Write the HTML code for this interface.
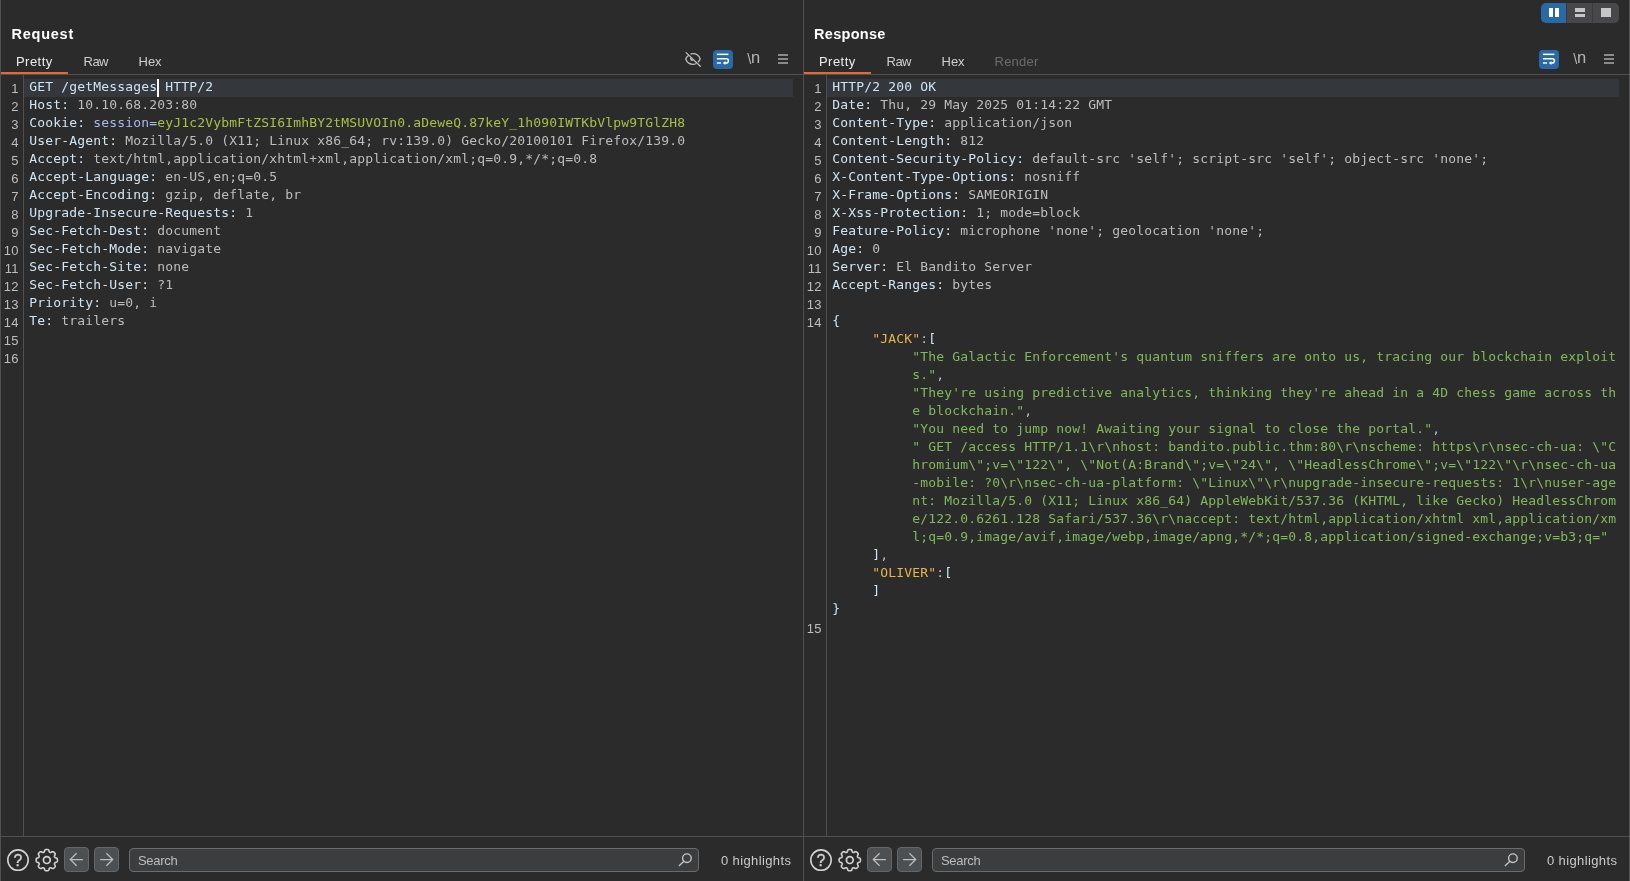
<!DOCTYPE html>
<html lang="en"><head><meta charset="utf-8"><title>Repeater</title>
<style>
*{box-sizing:border-box;margin:0;padding:0}
html,body{width:1630px;height:881px;overflow:hidden;background:#2b2b2b}
body{position:relative;font-family:"Liberation Sans","DejaVu Sans",sans-serif;font-size:13px;color:#d6d6d6}
#app{position:absolute;left:0;top:0;width:1630px;height:881px;will-change:transform}
.abs{position:absolute}
.pane{position:absolute;top:0;height:881px;overflow:hidden}
.vline,.hline{position:absolute;background:#505050}
.title{position:absolute;top:24px;height:20px;line-height:20px;font-weight:700;font-size:14.5px;color:#fff;white-space:pre}
.tab{position:absolute;top:52px;height:20px;line-height:20px;font-size:13px;color:#cecece;white-space:pre}
.tab.dis{color:#6c6c6c}
.tab.sel{color:#ececec}
.uline{position:absolute;top:72px;height:2px;background:#e26b35}
.hl{position:absolute;top:79px;height:18px;background:#34383c}
.ln{position:absolute;left:0;width:18.9px;height:18px;line-height:18px;text-align:right;font-size:13px;color:#bebebe;padding-top:1px;white-space:pre;letter-spacing:.3px}
.row{position:absolute;left:29.2px;height:18px;line-height:18px;white-space:pre;font-family:"DejaVu Sans Mono","Liberation Mono",monospace;font-size:13px;letter-spacing:0.1733px;margin-top:-1px}
.hn{color:#cfe4f4}.hv{color:#bdbdbd}.pk{color:#a9b9ef}.pv{color:#a5c044}.jk{color:#e6b450}.js{color:#80b95a}
.caret{position:absolute;left:157px;top:79px;width:2px;height:18px;background:#fff}
.wrapbtn{position:absolute;top:50px}
.nl{position:absolute;top:47.5px;height:22px;line-height:22px;color:#b4b4b4;white-space:pre}
.nl b{font-weight:400;font-size:14.5px;display:inline-block;vertical-align:baseline;position:relative;top:-0.2px}
.nl i{font-style:normal;font-size:16.5px;display:inline-block;vertical-align:baseline;margin-left:-0.2px;letter-spacing:0;position:relative;top:-1.7px}
.burger{position:absolute;top:54px;width:10px;height:10px;background:linear-gradient(#8a8a8a 0 2px,transparent 2px 4px,#8a8a8a 4px 6px,transparent 6px 8px,#8a8a8a 8px 10px)}
.navbtn{position:absolute;top:847px;width:25px;height:25px;border-radius:4px;background:#4c5052;border:1px solid #63676a}
.navbtn svg{position:absolute;left:-1px;top:-1px}
.search{position:absolute;top:848px;height:24px;border:1px solid #6b6b6b;border-radius:4px;background:#3c3d3f}
.search span{position:absolute;left:8px;top:1.7px;height:20px;line-height:20px;font-size:13px;color:#bdbdbd;letter-spacing:-.3px}
.search .mag{position:absolute;right:5px;top:2.9px}
.hi{position:absolute;top:851px;height:20px;line-height:20px;font-size:13px;color:#cacaca;white-space:pre}
.seg{position:absolute;top:3px;height:20px}
</style></head>
<body>
<div id="app">
<!-- frame lines -->
<div class="vline" style="left:0;top:0;width:1px;height:881px"></div>
<div class="vline" style="left:803px;top:0;width:1px;height:881px"></div>
<div class="vline" style="left:1629px;top:0;width:1px;height:881px;background:#565656"></div>
<div class="hline" style="left:1px;top:74px;width:802px;height:1px"></div>
<div class="hline" style="left:804px;top:74px;width:825px;height:1px"></div>
<div class="hline" style="left:0;top:836px;width:1629px;height:1px"></div>
<div class="vline" style="left:23px;top:75px;width:1px;height:761px"></div>
<div class="vline" style="left:826px;top:75px;width:1px;height:761px"></div>

<!-- ================= REQUEST ================= -->
<div class="title" style="left:11.5px;letter-spacing:.75px">Request</div>
<div class="tab sel" style="left:16px;letter-spacing:.45px">Pretty</div>
<div class="tab" style="left:83.5px;letter-spacing:-.5px">Raw</div>
<div class="tab" style="left:138.5px">Hex</div>
<div class="uline" style="left:1px;width:67px"></div>

<svg class="abs" style="left:678px;top:46px" width="30" height="26" viewBox="0 0 30 26"><g transform="translate(14.95 13.05) scale(.935) translate(-14.95 -13.05)"><g fill="none" stroke="#bebebe" stroke-width="1.4" stroke-linecap="round"><path d="M7.6 6.2L22.8 20.7"/><path d="M10.2 9.2C8.6 10.3 7.6 11.7 7.2 13c1.2 3.2 4.2 5.7 7.8 5.7 1.1 0 2.1-.2 3-.6"/><path d="M13 7.6c.6-.2 1.300-.3 2-.3 3.600 0 6.600 2.500 7.700 5.700-.4 1.100-1.100 2.100-2 3"/></g><path d="M12.2 11.4a2.400 2.400 0 0 0 3.300 3.300z" fill="#bebebe"/></g></svg>
<svg class="wrapbtn" style="left:713px" width="20" height="19" viewBox="0 0 20 19"><rect width="20" height="19" rx="4" ry="4" fill="#2969a6"/><g fill="none" stroke="#fff" stroke-width="1.5"><path d="M3.9 4.35H15.4"/><path d="M3.9 8.7H13.3a2.15 2.15 0 0 1 0 4.3H11.8"/></g><path d="M9.7 13l2.7-2v4z" fill="#fff"/><path d="M3.9 13H8" stroke="#dfe8f1" stroke-width="1.7" fill="none"/></svg>
<div class="nl" style="left:747.2px"><b>\</b><i>n</i></div>
<div class="burger" style="left:778px"></div>

<div class="hl" style="left:24px;width:769px"></div>
<div class="caret"></div>
<div class="pane" id="req" style="left:0;width:803px">
<div class="ln" style="top:79px">1</div>
<div class="row" style="top:79px"><span class="hn">GET /getMessages HTTP/2</span></div>
<div class="ln" style="top:97px">2</div>
<div class="row" style="top:97px"><span class="hn">Host:</span><span class="hv"> 10.10.68.203:80</span></div>
<div class="ln" style="top:115px">3</div>
<div class="row" style="top:115px"><span class="hn">Cookie:</span><span class="hv"> </span><span class="pk">session=</span><span class="pv">eyJ1c2VybmFtZSI6ImhBY2tMSUVOIn0.aDeweQ.87keY_1h090IWTKbVlpw9TGlZH8</span></div>
<div class="ln" style="top:133px">4</div>
<div class="row" style="top:133px"><span class="hn">User-Agent:</span><span class="hv"> Mozilla/5.0 (X11; Linux x86_64; rv:139.0) Gecko/20100101 Firefox/139.0</span></div>
<div class="ln" style="top:151px">5</div>
<div class="row" style="top:151px"><span class="hn">Accept:</span><span class="hv"> text/html,application/xhtml+xml,application/xml;q=0.9,*/*;q=0.8</span></div>
<div class="ln" style="top:169px">6</div>
<div class="row" style="top:169px"><span class="hn">Accept-Language:</span><span class="hv"> en-US,en;q=0.5</span></div>
<div class="ln" style="top:187px">7</div>
<div class="row" style="top:187px"><span class="hn">Accept-Encoding:</span><span class="hv"> gzip, deflate, br</span></div>
<div class="ln" style="top:205px">8</div>
<div class="row" style="top:205px"><span class="hn">Upgrade-Insecure-Requests:</span><span class="hv"> 1</span></div>
<div class="ln" style="top:223px">9</div>
<div class="row" style="top:223px"><span class="hn">Sec-Fetch-Dest:</span><span class="hv"> document</span></div>
<div class="ln" style="top:241px">10</div>
<div class="row" style="top:241px"><span class="hn">Sec-Fetch-Mode:</span><span class="hv"> navigate</span></div>
<div class="ln" style="top:259px">11</div>
<div class="row" style="top:259px"><span class="hn">Sec-Fetch-Site:</span><span class="hv"> none</span></div>
<div class="ln" style="top:277px">12</div>
<div class="row" style="top:277px"><span class="hn">Sec-Fetch-User:</span><span class="hv"> ?1</span></div>
<div class="ln" style="top:295px">13</div>
<div class="row" style="top:295px"><span class="hn">Priority:</span><span class="hv"> u=0, i</span></div>
<div class="ln" style="top:313px">14</div>
<div class="row" style="top:313px"><span class="hn">Te:</span><span class="hv"> trailers</span></div>
<div class="ln" style="top:331px">15</div>
<div class="ln" style="top:349px">16</div>
</div>

<svg class="abs" style="left:6px;top:848px" width="24" height="24" viewBox="0 0 24 24"><circle cx="12" cy="12.1" r="10.2" fill="none" stroke="#d2d2d2" stroke-width="1.6"/><text x="11.9" y="17.7" text-anchor="middle" font-family="Liberation Sans, sans-serif" font-size="15.8" font-weight="400" fill="#d2d2d2" stroke="#d2d2d2" stroke-width="0.4">?</text></svg>
<svg class="abs" style="left:34px;top:847px" width="26" height="26" viewBox="0 0 26 26"><g transform="translate(12.8,13.1)" fill="none" stroke="#d2d2d2" stroke-width="1.6" stroke-linejoin="round"><circle r="3.4" stroke-width="1.7"/><path d="M0.00 -10.65 L0.28 -10.64 L0.56 -10.63 L0.83 -10.60 L1.11 -10.54 L1.38 -10.45 L1.63 -10.30 L1.86 -10.04 L2.05 -9.65 L2.20 -9.17 L2.34 -8.72 L2.48 -8.38 L2.65 -8.15 L2.83 -7.98 L3.02 -7.86 L3.22 -7.77 L3.43 -7.70 L3.65 -7.64 L3.89 -7.63 L4.17 -7.68 L4.51 -7.82 L4.93 -8.04 L5.37 -8.27 L5.78 -8.41 L6.13 -8.44 L6.42 -8.36 L6.67 -8.24 L6.90 -8.08 L7.12 -7.91 L7.33 -7.72 L7.53 -7.53 L7.72 -7.33 L7.91 -7.12 L8.08 -6.90 L8.24 -6.67 L8.36 -6.42 L8.44 -6.13 L8.41 -5.78 L8.27 -5.37 L8.04 -4.93 L7.82 -4.51 L7.68 -4.17 L7.63 -3.89 L7.64 -3.65 L7.70 -3.43 L7.77 -3.22 L7.86 -3.02 L7.98 -2.83 L8.15 -2.65 L8.38 -2.48 L8.72 -2.34 L9.17 -2.20 L9.65 -2.05 L10.04 -1.86 L10.30 -1.63 L10.45 -1.38 L10.54 -1.11 L10.60 -0.83 L10.63 -0.56 L10.64 -0.28 L10.65 -0.00 L10.64 0.28 L10.63 0.56 L10.60 0.83 L10.54 1.11 L10.45 1.38 L10.30 1.63 L10.04 1.86 L9.65 2.05 L9.17 2.20 L8.72 2.34 L8.38 2.48 L8.15 2.65 L7.98 2.83 L7.86 3.02 L7.77 3.22 L7.70 3.43 L7.64 3.65 L7.63 3.89 L7.68 4.17 L7.82 4.51 L8.04 4.93 L8.27 5.37 L8.41 5.78 L8.44 6.13 L8.36 6.42 L8.24 6.67 L8.08 6.90 L7.91 7.12 L7.72 7.33 L7.53 7.53 L7.33 7.72 L7.12 7.91 L6.90 8.08 L6.67 8.24 L6.42 8.36 L6.13 8.44 L5.78 8.41 L5.37 8.27 L4.93 8.04 L4.51 7.82 L4.17 7.68 L3.89 7.63 L3.65 7.64 L3.43 7.70 L3.22 7.77 L3.02 7.86 L2.83 7.98 L2.65 8.15 L2.48 8.38 L2.34 8.72 L2.20 9.17 L2.05 9.65 L1.86 10.04 L1.63 10.30 L1.38 10.45 L1.11 10.54 L0.83 10.60 L0.56 10.63 L0.28 10.64 L0.00 10.65 L-0.28 10.64 L-0.56 10.63 L-0.83 10.60 L-1.11 10.54 L-1.38 10.45 L-1.63 10.30 L-1.86 10.04 L-2.05 9.65 L-2.20 9.17 L-2.34 8.72 L-2.48 8.38 L-2.65 8.15 L-2.83 7.98 L-3.02 7.86 L-3.22 7.77 L-3.43 7.70 L-3.65 7.64 L-3.89 7.63 L-4.17 7.68 L-4.51 7.82 L-4.93 8.04 L-5.37 8.27 L-5.78 8.41 L-6.13 8.44 L-6.42 8.36 L-6.67 8.24 L-6.90 8.08 L-7.12 7.91 L-7.33 7.72 L-7.53 7.53 L-7.72 7.33 L-7.91 7.12 L-8.08 6.90 L-8.24 6.67 L-8.36 6.42 L-8.44 6.13 L-8.41 5.78 L-8.27 5.37 L-8.04 4.93 L-7.82 4.51 L-7.68 4.17 L-7.63 3.89 L-7.64 3.65 L-7.70 3.43 L-7.77 3.22 L-7.86 3.02 L-7.98 2.83 L-8.15 2.65 L-8.38 2.48 L-8.72 2.34 L-9.17 2.20 L-9.65 2.05 L-10.04 1.86 L-10.30 1.63 L-10.45 1.38 L-10.54 1.11 L-10.60 0.83 L-10.63 0.56 L-10.64 0.28 L-10.65 0.00 L-10.64 -0.28 L-10.63 -0.56 L-10.60 -0.83 L-10.54 -1.11 L-10.45 -1.38 L-10.30 -1.63 L-10.04 -1.86 L-9.65 -2.05 L-9.17 -2.20 L-8.72 -2.34 L-8.38 -2.48 L-8.15 -2.65 L-7.98 -2.83 L-7.86 -3.02 L-7.77 -3.22 L-7.70 -3.43 L-7.64 -3.65 L-7.63 -3.89 L-7.68 -4.17 L-7.82 -4.51 L-8.04 -4.93 L-8.27 -5.37 L-8.41 -5.78 L-8.44 -6.13 L-8.36 -6.42 L-8.24 -6.67 L-8.08 -6.90 L-7.91 -7.12 L-7.72 -7.33 L-7.53 -7.53 L-7.33 -7.72 L-7.12 -7.91 L-6.90 -8.08 L-6.67 -8.24 L-6.42 -8.36 L-6.13 -8.44 L-5.78 -8.41 L-5.37 -8.27 L-4.93 -8.04 L-4.51 -7.82 L-4.17 -7.68 L-3.89 -7.63 L-3.65 -7.64 L-3.43 -7.70 L-3.22 -7.77 L-3.02 -7.86 L-2.83 -7.98 L-2.65 -8.15 L-2.48 -8.38 L-2.34 -8.72 L-2.20 -9.17 L-2.05 -9.65 L-1.86 -10.04 L-1.63 -10.30 L-1.38 -10.45 L-1.11 -10.54 L-0.83 -10.60 L-0.56 -10.63 L-0.28 -10.64Z"/></g></svg>
<div class="navbtn" style="left:64px"><svg width="25" height="25" viewBox="0 0 25 25"><path d="M18.9 12.5H6.6M12.6 6.2L6.3 12.5l6.3 6.3" fill="none" stroke="#bdbdbd" stroke-width="1.25"/></svg></div>
<div class="navbtn" style="left:94px"><svg width="25" height="25" viewBox="0 0 25 25"><path d="M6.1 12.5H18.4M12.4 6.2l6.3 6.3-6.3 6.3" fill="none" stroke="#bdbdbd" stroke-width="1.25"/></svg></div>
<div class="search" style="left:129px;width:570px"><span>Search</span><svg class="mag" width="16" height="16" viewBox="0 0 16 16"><circle cx="9.9" cy="6.2" r="4.3" fill="none" stroke="#c4c4c4" stroke-width="1.4"/><path d="M6.9 9.3L1.9 14" stroke="#c4c4c4" stroke-width="1.4" fill="none"/></svg></div>

<div class="hi" style="left:721px;letter-spacing:.38px">0 highlights</div>

<!-- ================= RESPONSE ================= -->
<div class="seg" style="left:1541px;width:78px;border-radius:5px;overflow:hidden;background:#3a3a3b">
 <div class="abs" style="left:0;top:0;width:25px;height:20px;background:#2969a6"></div>
 <div class="abs" style="left:26px;top:0;width:25px;height:20px;background:#48484a"></div>
 <div class="abs" style="left:52px;top:0;width:26px;height:20px;background:#48484a"></div>
 <div class="abs" style="left:7.6px;top:5px;width:4.4px;height:9px;background:#fff"></div>
 <div class="abs" style="left:14px;top:5px;width:4.4px;height:9px;background:#fff"></div>
 <div class="abs" style="left:33.5px;top:5.2px;width:10.7px;height:3.4px;background:#c6c6c6"></div>
 <div class="abs" style="left:33.5px;top:10.6px;width:10.7px;height:3.4px;background:#c6c6c6"></div>
 <div class="abs" style="left:59.6px;top:5.2px;width:10.7px;height:8.8px;background:#c6c6c6"></div>
</div>
<div class="title" style="left:814px;letter-spacing:.3px">Response</div>
<div class="tab sel" style="left:819px;letter-spacing:.45px">Pretty</div>
<div class="tab" style="left:886.5px;letter-spacing:-.5px">Raw</div>
<div class="tab" style="left:941.5px">Hex</div>
<div class="tab dis" style="left:994.6px;letter-spacing:.2px">Render</div>
<div class="uline" style="left:804px;width:67px"></div>
<svg class="wrapbtn" style="left:1539px" width="20" height="19" viewBox="0 0 20 19"><rect width="20" height="19" rx="4" ry="4" fill="#2969a6"/><g fill="none" stroke="#fff" stroke-width="1.5"><path d="M3.9 4.35H15.4"/><path d="M3.9 8.7H13.3a2.15 2.15 0 0 1 0 4.3H11.8"/></g><path d="M9.7 13l2.7-2v4z" fill="#fff"/><path d="M3.9 13H8" stroke="#dfe8f1" stroke-width="1.7" fill="none"/></svg>
<div class="nl" style="left:1573.2px"><b>\</b><i>n</i></div>
<div class="burger" style="left:1604px"></div>

<div class="hl" style="left:827px;width:792px"></div>
<div class="pane" id="res" style="left:803px;width:826px">
<div class="ln" style="top:79px">1</div>
<div class="row" style="top:79px"><span class="hn">HTTP/2 200 OK</span></div>
<div class="ln" style="top:97px">2</div>
<div class="row" style="top:97px"><span class="hn">Date:</span><span class="hv"> Thu, 29 May 2025 01:14:22 GMT</span></div>
<div class="ln" style="top:115px">3</div>
<div class="row" style="top:115px"><span class="hn">Content-Type:</span><span class="hv"> application/json</span></div>
<div class="ln" style="top:133px">4</div>
<div class="row" style="top:133px"><span class="hn">Content-Length:</span><span class="hv"> 812</span></div>
<div class="ln" style="top:151px">5</div>
<div class="row" style="top:151px"><span class="hn">Content-Security-Policy:</span><span class="hv"> default-src 'self'; script-src 'self'; object-src 'none';</span></div>
<div class="ln" style="top:169px">6</div>
<div class="row" style="top:169px"><span class="hn">X-Content-Type-Options:</span><span class="hv"> nosniff</span></div>
<div class="ln" style="top:187px">7</div>
<div class="row" style="top:187px"><span class="hn">X-Frame-Options:</span><span class="hv"> SAMEORIGIN</span></div>
<div class="ln" style="top:205px">8</div>
<div class="row" style="top:205px"><span class="hn">X-Xss-Protection:</span><span class="hv"> 1; mode=block</span></div>
<div class="ln" style="top:223px">9</div>
<div class="row" style="top:223px"><span class="hn">Feature-Policy:</span><span class="hv"> microphone 'none'; geolocation 'none';</span></div>
<div class="ln" style="top:241px">10</div>
<div class="row" style="top:241px"><span class="hn">Age:</span><span class="hv"> 0</span></div>
<div class="ln" style="top:259px">11</div>
<div class="row" style="top:259px"><span class="hn">Server:</span><span class="hv"> El Bandito Server</span></div>
<div class="ln" style="top:277px">12</div>
<div class="row" style="top:277px"><span class="hn">Accept-Ranges:</span><span class="hv"> bytes</span></div>
<div class="ln" style="top:295px">13</div>
<div class="ln" style="top:313px">14</div>
<div class="row" style="top:313px"><span class="hn">{</span></div>
<div class="row" style="top:331px">     <span class="jk">"JACK"</span><span class="hv">:</span><span class="hn">[</span></div>
<div class="row" style="top:349px">          <span class="js">"The Galactic Enforcement's quantum sniffers are onto us, tracing our blockchain exploit</span></div>
<div class="row" style="top:367px">          <span class="js">s."</span><span class="hv">,</span></div>
<div class="row" style="top:385px">          <span class="js">"They're using predictive analytics, thinking they're ahead in a 4D chess game across th</span></div>
<div class="row" style="top:403px">          <span class="js">e blockchain."</span><span class="hv">,</span></div>
<div class="row" style="top:421px">          <span class="js">"You need to jump now! Awaiting your signal to close the portal."</span><span class="hv">,</span></div>
<div class="row" style="top:439px">          <span class="js">" GET /access HTTP/1.1\r\nhost: bandito.public.thm:80\r\nscheme: https\r\nsec-ch-ua: \"C</span></div>
<div class="row" style="top:457px">          <span class="js">hromium\";v=\"122\", \"Not(A:Brand\";v=\"24\", \"HeadlessChrome\";v=\"122\"\r\nsec-ch-ua</span></div>
<div class="row" style="top:475px">          <span class="js">-mobile: ?0\r\nsec-ch-ua-platform: \"Linux\"\r\nupgrade-insecure-requests: 1\r\nuser-age</span></div>
<div class="row" style="top:493px">          <span class="js">nt: Mozilla/5.0 (X11; Linux x86_64) AppleWebKit/537.36 (KHTML, like Gecko) HeadlessChrom</span></div>
<div class="row" style="top:511px">          <span class="js">e/122.0.6261.128 Safari/537.36\r\naccept: text/html,application/xhtml xml,application/xm</span></div>
<div class="row" style="top:529px">          <span class="js">l;q=0.9,image/avif,image/webp,image/apng,*/*;q=0.8,application/signed-exchange;v=b3;q="</span></div>
<div class="row" style="top:547px">     <span class="hn">]</span><span class="hv">,</span></div>
<div class="row" style="top:565px">     <span class="jk">"OLIVER"</span><span class="hv">:</span><span class="hn">[</span></div>
<div class="row" style="top:583px">     <span class="hn">]</span></div>
<div class="row" style="top:601px"><span class="hn">}</span></div>
<div class="ln" style="top:619px">15</div>
</div>

<svg class="abs" style="left:809px;top:848px" width="24" height="24" viewBox="0 0 24 24"><circle cx="12" cy="12.1" r="10.2" fill="none" stroke="#d2d2d2" stroke-width="1.6"/><text x="11.9" y="17.7" text-anchor="middle" font-family="Liberation Sans, sans-serif" font-size="15.8" font-weight="400" fill="#d2d2d2" stroke="#d2d2d2" stroke-width="0.4">?</text></svg>
<svg class="abs" style="left:837px;top:847px" width="26" height="26" viewBox="0 0 26 26"><g transform="translate(12.8,13.1)" fill="none" stroke="#d2d2d2" stroke-width="1.6" stroke-linejoin="round"><circle r="3.4" stroke-width="1.7"/><path d="M0.00 -10.65 L0.28 -10.64 L0.56 -10.63 L0.83 -10.60 L1.11 -10.54 L1.38 -10.45 L1.63 -10.30 L1.86 -10.04 L2.05 -9.65 L2.20 -9.17 L2.34 -8.72 L2.48 -8.38 L2.65 -8.15 L2.83 -7.98 L3.02 -7.86 L3.22 -7.77 L3.43 -7.70 L3.65 -7.64 L3.89 -7.63 L4.17 -7.68 L4.51 -7.82 L4.93 -8.04 L5.37 -8.27 L5.78 -8.41 L6.13 -8.44 L6.42 -8.36 L6.67 -8.24 L6.90 -8.08 L7.12 -7.91 L7.33 -7.72 L7.53 -7.53 L7.72 -7.33 L7.91 -7.12 L8.08 -6.90 L8.24 -6.67 L8.36 -6.42 L8.44 -6.13 L8.41 -5.78 L8.27 -5.37 L8.04 -4.93 L7.82 -4.51 L7.68 -4.17 L7.63 -3.89 L7.64 -3.65 L7.70 -3.43 L7.77 -3.22 L7.86 -3.02 L7.98 -2.83 L8.15 -2.65 L8.38 -2.48 L8.72 -2.34 L9.17 -2.20 L9.65 -2.05 L10.04 -1.86 L10.30 -1.63 L10.45 -1.38 L10.54 -1.11 L10.60 -0.83 L10.63 -0.56 L10.64 -0.28 L10.65 -0.00 L10.64 0.28 L10.63 0.56 L10.60 0.83 L10.54 1.11 L10.45 1.38 L10.30 1.63 L10.04 1.86 L9.65 2.05 L9.17 2.20 L8.72 2.34 L8.38 2.48 L8.15 2.65 L7.98 2.83 L7.86 3.02 L7.77 3.22 L7.70 3.43 L7.64 3.65 L7.63 3.89 L7.68 4.17 L7.82 4.51 L8.04 4.93 L8.27 5.37 L8.41 5.78 L8.44 6.13 L8.36 6.42 L8.24 6.67 L8.08 6.90 L7.91 7.12 L7.72 7.33 L7.53 7.53 L7.33 7.72 L7.12 7.91 L6.90 8.08 L6.67 8.24 L6.42 8.36 L6.13 8.44 L5.78 8.41 L5.37 8.27 L4.93 8.04 L4.51 7.82 L4.17 7.68 L3.89 7.63 L3.65 7.64 L3.43 7.70 L3.22 7.77 L3.02 7.86 L2.83 7.98 L2.65 8.15 L2.48 8.38 L2.34 8.72 L2.20 9.17 L2.05 9.65 L1.86 10.04 L1.63 10.30 L1.38 10.45 L1.11 10.54 L0.83 10.60 L0.56 10.63 L0.28 10.64 L0.00 10.65 L-0.28 10.64 L-0.56 10.63 L-0.83 10.60 L-1.11 10.54 L-1.38 10.45 L-1.63 10.30 L-1.86 10.04 L-2.05 9.65 L-2.20 9.17 L-2.34 8.72 L-2.48 8.38 L-2.65 8.15 L-2.83 7.98 L-3.02 7.86 L-3.22 7.77 L-3.43 7.70 L-3.65 7.64 L-3.89 7.63 L-4.17 7.68 L-4.51 7.82 L-4.93 8.04 L-5.37 8.27 L-5.78 8.41 L-6.13 8.44 L-6.42 8.36 L-6.67 8.24 L-6.90 8.08 L-7.12 7.91 L-7.33 7.72 L-7.53 7.53 L-7.72 7.33 L-7.91 7.12 L-8.08 6.90 L-8.24 6.67 L-8.36 6.42 L-8.44 6.13 L-8.41 5.78 L-8.27 5.37 L-8.04 4.93 L-7.82 4.51 L-7.68 4.17 L-7.63 3.89 L-7.64 3.65 L-7.70 3.43 L-7.77 3.22 L-7.86 3.02 L-7.98 2.83 L-8.15 2.65 L-8.38 2.48 L-8.72 2.34 L-9.17 2.20 L-9.65 2.05 L-10.04 1.86 L-10.30 1.63 L-10.45 1.38 L-10.54 1.11 L-10.60 0.83 L-10.63 0.56 L-10.64 0.28 L-10.65 0.00 L-10.64 -0.28 L-10.63 -0.56 L-10.60 -0.83 L-10.54 -1.11 L-10.45 -1.38 L-10.30 -1.63 L-10.04 -1.86 L-9.65 -2.05 L-9.17 -2.20 L-8.72 -2.34 L-8.38 -2.48 L-8.15 -2.65 L-7.98 -2.83 L-7.86 -3.02 L-7.77 -3.22 L-7.70 -3.43 L-7.64 -3.65 L-7.63 -3.89 L-7.68 -4.17 L-7.82 -4.51 L-8.04 -4.93 L-8.27 -5.37 L-8.41 -5.78 L-8.44 -6.13 L-8.36 -6.42 L-8.24 -6.67 L-8.08 -6.90 L-7.91 -7.12 L-7.72 -7.33 L-7.53 -7.53 L-7.33 -7.72 L-7.12 -7.91 L-6.90 -8.08 L-6.67 -8.24 L-6.42 -8.36 L-6.13 -8.44 L-5.78 -8.41 L-5.37 -8.27 L-4.93 -8.04 L-4.51 -7.82 L-4.17 -7.68 L-3.89 -7.63 L-3.65 -7.64 L-3.43 -7.70 L-3.22 -7.77 L-3.02 -7.86 L-2.83 -7.98 L-2.65 -8.15 L-2.48 -8.38 L-2.34 -8.72 L-2.20 -9.17 L-2.05 -9.65 L-1.86 -10.04 L-1.63 -10.30 L-1.38 -10.45 L-1.11 -10.54 L-0.83 -10.60 L-0.56 -10.63 L-0.28 -10.64Z"/></g></svg>
<div class="navbtn" style="left:867px"><svg width="25" height="25" viewBox="0 0 25 25"><path d="M18.9 12.5H6.6M12.6 6.2L6.3 12.5l6.3 6.3" fill="none" stroke="#bdbdbd" stroke-width="1.25"/></svg></div>
<div class="navbtn" style="left:897px"><svg width="25" height="25" viewBox="0 0 25 25"><path d="M6.1 12.5H18.4M12.4 6.2l6.3 6.3-6.3 6.3" fill="none" stroke="#bdbdbd" stroke-width="1.25"/></svg></div>
<div class="search" style="left:932px;width:593px"><span>Search</span><svg class="mag" width="16" height="16" viewBox="0 0 16 16"><circle cx="9.9" cy="6.2" r="4.3" fill="none" stroke="#c4c4c4" stroke-width="1.4"/><path d="M6.9 9.3L1.9 14" stroke="#c4c4c4" stroke-width="1.4" fill="none"/></svg></div>

<div class="hi" style="left:1547px;letter-spacing:.38px">0 highlights</div>
</div>
</body></html>
